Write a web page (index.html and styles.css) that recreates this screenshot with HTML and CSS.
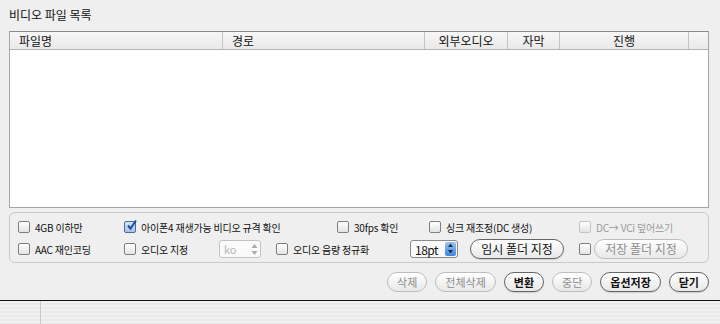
FILE: index.html
```html
<!DOCTYPE html>
<html>
    <head>
        <meta charset='utf-8'>
        <title>비디오 파일 목록</title>
        <link rel="stylesheet" href="styles.css">
    </head>
    <body>
        <div class="window">
            <div class="title">비디오 파일 목록</div>
            <div class="list">
                <div class="head">
                    <div class="col left">파일명</div>
                    <div class="col left">경로</div>
                    <div class="col">외부오디오</div>
                    <div class="col">자막</div>
                    <div class="col">진행</div>
                    <div class="col"></div>
                </div>
            </div>
            <div class="options">
                <div class="row row1">
                    <label class="chk w106"><span class="box"></span>4GB 이하만</label>
                    <label class="chk w213"><span class="box on"><svg width="13" height="13" viewBox="0 0 13 13"><path d="M3 6.5 L5.5 9.5 L11 1.5" fill="none" stroke="#1d4f9c" stroke-width="2"/></svg></span>아이폰4 재생가능 비디오 규격 확인</label>
                    <label class="chk w92"><span class="box"></span>30fps 확인</label>
                    <label class="chk w150"><span class="box"></span>싱크 재조정(DC 생성)</label>
                    <label class="chk off"><span class="box"></span>DC→ VCi 덮어쓰기</label>
                </div>
                <div class="row row2">
                    <label class="chk w106"><span class="box"></span>AAC 재인코딩</label>
                    <label class="chk w95"><span class="box"></span>오디오 지정</label>
                    <div class="w57">
                        <span class="spin">
                            <span class="val">ko</span>
                            <svg class="arrows" width="9" height="13" viewBox="0 0 9 13"><path d="M4.5 1 L7.5 5 L1.5 5 Z M4.5 12 L7.5 8 L1.5 8 Z" fill="#aaa"/></svg>
                        </span>
                    </div>
                    <label class="chk w134"><span class="box"></span>오디오 음량 정규화</label>
                    <div class="w60">
                        <span class="popup">
                            <span class="val">18pt</span>
                            <span class="blue"><svg width="11" height="13" viewBox="0 0 11 13"><path d="M5.5 1.5 L8 5 L3 5 Z M5.5 11.5 L8 8 L3 8 Z" fill="#1b2d4a"/></svg></span>
                        </span>
                    </div>
                    <div class="w109"><button class="btn wide">임시 폴더 지정</button></div>
                    <label class="chk w15"><span class="box"></span></label>
                    <button class="btn wide" disabled>저장 폴더 지정</button>
                </div>
            </div>
            <div class="actions">
                <button class="btn" disabled>삭제</button>
                <button class="btn" disabled>전체삭제</button>
                <button class="btn bold">변환</button>
                <button class="btn" disabled>중단</button>
                <button class="btn bold">옵션저장</button>
                <button class="btn bold">닫기</button>
            </div>
        </div>
        <div class="status">
            <div class="cell first"></div>
            <div class="cell"></div>
        </div>
    </body>
</html>
```

FILE: styles.css
```css
body {
    margin: 0;
    background: #efefef;
    font: 12px "Noto Sans CJK KR", "DejaVu Sans", sans-serif;
    color: #111;
    width: 720px;
    height: 324px;
    overflow: hidden;
}
.window {
    padding: 5px 11px 0 9px;
    height: 295px;
}
.title {
    height: 20px;
    line-height: 20px;
    font-size: 12px;
    margin-bottom: 6px;
}
.list {
    height: 175px;
    border: 1px solid #a5a5a5;
    border-top-color: #8a8a8a;
    background: #fff;
}
.head {
    display: grid;
    grid-template-columns: 213px 202px 83px 52px 129px 1fr;
    height: 17px;
    background: linear-gradient(#f7f7f7, #e9e9e9);
    border-bottom: 1px solid #b4b4b4;
}
.col {
    font-size: 12px;
    line-height: 17px;
    text-align: center;
    border-right: 1px solid #c3c3c3;
}
.col.left {
    text-align: left;
    padding-left: 9px;
}
.col:last-child {
    border-right: none;
}
.options {
    margin-top: 4px;
    height: 46px;
    border: 1px solid #c9c9c9;
    border-radius: 6px;
    padding: 3px 0 0 8px;
}
.row {
    display: flex;
    align-items: center;
    height: 22px;
}
.chk {
    display: flex;
    align-items: center;
    font-size: 10px;
    letter-spacing: -0.2px;
    white-space: nowrap;
}
.chk.off {
    color: #9a9a9a;
}
.box {
    box-sizing: border-box;
    width: 12px;
    height: 12px;
    border: 1px solid #7f7f7f;
    border-radius: 2px;
    background: linear-gradient(#fff, #e4e4e4);
    margin-right: 5px;
    position: relative;
    flex: none;
}
.off .box {
    border-color: #c4c4c4;
}
.box svg {
    position: absolute;
    left: 0;
    top: -3px;
}
.box.on {
    border-color: #4a6b9c;
    background: linear-gradient(#d6e4f7, #a9c2e6);
}
.w106 { width: 106px; }
.w213 { width: 213px; }
.w92 { width: 92px; }
.w150 { width: 150px; }
.w95 { width: 95px; }
.w57 { width: 57px; }
.w134 { width: 134px; }
.w60 { width: 60px; }
.w109 { width: 109px; }
.w15 { width: 15px; }
.spin, .popup {
    display: flex;
    align-items: center;
    justify-content: space-between;
    width: 42px;
    height: 18px;
    border: 1px solid #c2c2c2;
    border-radius: 3px;
    background: #fafafa;
    box-sizing: border-box;
    padding-left: 4px;
    padding-right: 1px;
}
.spin .val {
    color: #b5b5b5;
    font-size: 11px;
}
.popup {
    width: 48px;
    border-color: #8a8a8a;
}
.popup .val {
    font-size: 12px;
    letter-spacing: -0.5px;
}
.blue {
    display: flex;
    width: 11px;
    height: 14px;
    border-radius: 2px;
    background: linear-gradient(#9cc4f2, #3f86de);
}
.btn {
    font: 11px "Noto Sans CJK KR", "DejaVu Sans", sans-serif;
    height: 20px;
    padding: 0 9px;
    border: 1px solid #666;
    border-radius: 10px;
    background: linear-gradient(#ffffff, #e8e8e8);
    color: #111;
    line-height: 16px;
    box-shadow: 0 1px 1px rgba(0,0,0,0.15);
}
.btn.wide {
    width: 94px;
    padding: 0;
    font-size: 12px;
}
.btn[disabled] {
    border-color: #bdbdbd;
    color: #8d8d8d;
    box-shadow: none;
}
.btn.bold {
    font-weight: bold;
}
.actions {
    display: flex;
    justify-content: flex-end;
    gap: 8px;
    margin-top: 9px;
}
.status {
    display: flex;
    height: 23px;
    border-top: 1px solid #111;
    background: repeating-linear-gradient(#f1f1f1 0, #f1f1f1 2px, #e9e9e9 2px, #e9e9e9 4px);
}
.cell.first {
    width: 40px;
    border-right: 1px solid #c8c8c8;
}
```
